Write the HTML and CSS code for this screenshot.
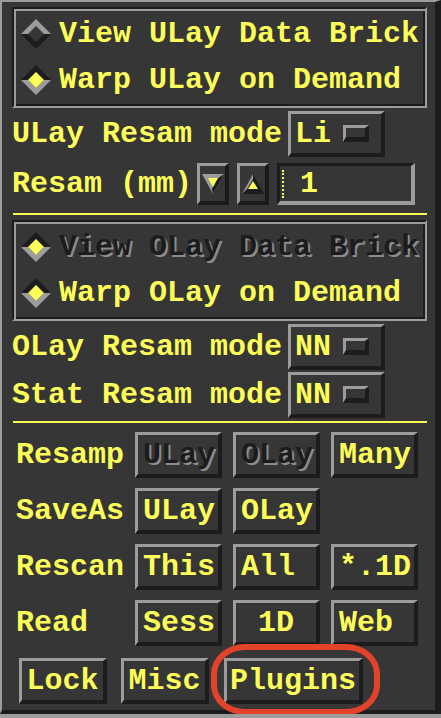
FILE: index.html
```html
<!DOCTYPE html>
<html lang="en">
<head>
    <meta charset="UTF-8">
    <meta name="viewport" content="width=device-width, initial-scale=1.0">
    <title>AFNI Define Datamode</title>
    <link rel="stylesheet" href="styles.css">
</head>
<body>
    <div class="panel">
        <!-- underlay warp mode -->
        <div class="frame">
            <div class="radio">
                <svg class="diamond" viewBox="0 0 30 30" width="30" height="30">
                    <polygon points="0,15 15,0 30,15 23,15 15,7 7,15" fill="#9c9c9c"/>
                    <polygon points="0,15 15,30 30,15 23,15 15,23 7,15" fill="#1c1c1c"/>
                </svg>
                <span>View ULay Data Brick</span>
            </div>
            <div class="radio">
                <svg class="diamond" viewBox="0 0 30 30" width="30" height="30">
                    <polygon points="0,15 15,0 30,15 23,15 15,7 7,15" fill="#1c1c1c"/>
                    <polygon points="0,15 15,30 30,15 23,15 15,23 7,15" fill="#9c9c9c"/>
                    <polygon points="7,15 15,7 23,15 15,23" fill="#fdfd5a"/>
                </svg>
                <span>Warp ULay on Demand</span>
            </div>
        </div>

        <div class="field-row first">
            <span class="label">ULay Resam mode</span>
            <div class="option"><span>Li</span><span class="indicator"></span></div>
        </div>

        <div class="field-row resam">
            <span class="label">Resam (mm)</span>
            <div class="arrow">
                <svg width="22" height="20" viewBox="0 0 22 20">
                    <polygon points="0,0 22,0 11,20" fill="#9c9c9c"/>
                    <polygon points="15,5 22,0 11,20 10,15" fill="#1c1c1c"/>
                    <polygon points="6,4 16,4 11,13" fill="#fdfd5a"/>
                </svg>
            </div>
            <div class="arrow">
                <svg width="22" height="20" viewBox="0 0 22 20">
                    <polygon points="11,0 22,20 0,20" fill="#1c1c1c"/>
                    <polygon points="11,0 0,20 5,15 11,5" fill="#9c9c9c"/>
                    <polygon points="11,7 16,15 6,15" fill="#fdfd5a"/>
                </svg>
            </div>
            <div class="textfield"><span class="caret"></span><span class="value">1</span></div>
        </div>

        <div class="sep top"></div>

        <!-- overlay warp mode -->
        <div class="frame">
            <div class="radio">
                <svg class="diamond" viewBox="0 0 30 30" width="30" height="30">
                    <polygon points="0,15 15,0 30,15 23,15 15,7 7,15" fill="#1c1c1c"/>
                    <polygon points="0,15 15,30 30,15 23,15 15,23 7,15" fill="#9c9c9c"/>
                    <polygon points="7,15 15,7 23,15 15,23" fill="#fdfd5a"/>
                </svg>
                <span class="dim">View OLay Data Brick</span>
            </div>
            <div class="radio">
                <svg class="diamond" viewBox="0 0 30 30" width="30" height="30">
                    <polygon points="0,15 15,0 30,15 23,15 15,7 7,15" fill="#1c1c1c"/>
                    <polygon points="0,15 15,30 30,15 23,15 15,23 7,15" fill="#9c9c9c"/>
                    <polygon points="7,15 15,7 23,15 15,23" fill="#fdfd5a"/>
                </svg>
                <span>Warp OLay on Demand</span>
            </div>
        </div>

        <div class="field-row first">
            <span class="label">OLay Resam mode</span>
            <div class="option"><span>NN</span><span class="indicator"></span></div>
        </div>
        <div class="field-row stat">
            <span class="label">Stat Resam mode</span>
            <div class="option"><span>NN</span><span class="indicator"></span></div>
        </div>

        <div class="sep bottom"></div>

        <div class="grid">
            <span class="label">Resamp</span>
            <div class="btn"><span class="dim">ULay</span></div>
            <div class="btn"><span class="dim">OLay</span></div>
            <div class="btn">Many</div>

            <span class="label">SaveAs</span>
            <div class="btn">ULay</div>
            <div class="btn">OLay</div>
            <span></span>

            <span class="label">Rescan</span>
            <div class="btn">This</div>
            <div class="btn">All</div>
            <div class="btn">*.1D</div>

            <span class="label">Read</span>
            <div class="btn">Sess</div>
            <div class="btn center">1D</div>
            <div class="btn">Web</div>
        </div>

        <div class="tools">
            <div class="btn lock">Lock</div>
            <div class="btn misc">Misc</div>
            <div class="btn plugins">Plugins</div>
        </div>

        <div class="mark"></div>
    </div>
</body>
</html>
```

FILE: styles.css
```css
body {
    margin: 0;
    background-color: #9c9c9c;
}

.panel {
    position: relative;
    width: 441px;
    height: 714px;
    box-sizing: border-box;
    background-color: #363636;
    border-top: 2px solid #9c9c9c;
    border-left: 2px solid #9c9c9c;
    border-right: 6px solid #1c1c1c;
    border-bottom: 4px solid #1c1c1c;
    font-family: "Liberation Mono", "DejaVu Sans Mono", monospace;
    font-weight: bold;
    font-size: 30px;
    line-height: 34px;
    color: #fdfd5a; /* motif yellow */
    white-space: nowrap;
}

.frame {
    width: 415px;
    height: 101px;
    box-sizing: border-box;
    margin: 5px 0 0 10px;
    padding: 2px;
    border: 2px solid;
    border-color: #1c1c1c #9c9c9c #9c9c9c #1c1c1c;
    box-shadow: inset 2px 2px 0 #9c9c9c, inset -2px -2px 0 #1c1c1c;
}

.radio {
    display: flex;
    align-items: center;
    height: 46px;
    padding-left: 5px;
    gap: 8px;
}

.diamond {
    flex: none;
}

.dim {
    color: #1c1c1c;
    text-shadow: 2px 2px 0 #8c8c8c;
}

.field-row {
    display: flex;
    align-items: center;
    margin-left: 10px;
    gap: 6px;
}

.field-row.first {
    margin-top: 3px;
}

.field-row.stat {
    margin-top: 2px;
}

.field-row.resam {
    margin-top: 6px;
    gap: 8px;
}

.resam .label {
    margin-right: -3px;
}

.option {
    display: flex;
    align-items: center;
    width: 97px;
    height: 46px;
    box-sizing: border-box;
    padding: 0 12px 0 4px;
    border-style: solid;
    border-width: 3px 4px 4px 3px;
    border-color: #9c9c9c #1c1c1c #1c1c1c #9c9c9c;
}

.indicator {
    margin-left: auto;
    width: 26px;
    height: 17px;
    box-sizing: border-box;
    border-style: solid;
    border-width: 3px 4px 5px 3px;
    border-color: #9c9c9c #1c1c1c #1c1c1c #9c9c9c;
}

.arrow {
    display: flex;
    align-items: center;
    justify-content: center;
    width: 32px;
    height: 42px;
    box-sizing: border-box;
    border-style: solid;
    border-width: 3px 4px 4px 3px;
    border-color: #9c9c9c #1c1c1c #1c1c1c #9c9c9c;
}

.textfield {
    display: flex;
    align-items: center;
    width: 138px;
    height: 42px;
    box-sizing: border-box;
    padding-left: 2px;
    border-style: solid;
    border-width: 3px 4px 4px 3px;
    border-color: #1c1c1c #9c9c9c #9c9c9c #1c1c1c;
}

.caret {
    width: 0;
    height: 28px;
    border-left: 2px dotted #fdfd5a;
}

.value {
    margin-left: 16px;
}

.sep {
    width: 414px;
    height: 2px;
    margin-left: 11px;
    background-color: #fdfd5a;
}

.sep.top {
    margin-top: 8px;
    margin-bottom: 4px;
}

.sep.bottom {
    margin-top: 3px;
}

.grid {
    display: grid;
    grid-template-columns: 108px 87px 87px 87px;
    grid-auto-rows: 46px;
    column-gap: 11px;
    row-gap: 10px;
    margin: 9px 0 0 14px;
    align-items: center;
}

.btn {
    display: flex;
    align-items: center;
    height: 46px;
    box-sizing: border-box;
    padding-left: 5px;
    border-style: solid;
    border-width: 3px 4px 4px 3px;
    border-color: #9c9c9c #1c1c1c #1c1c1c #9c9c9c;
}

.btn.center {
    justify-content: center;
    padding-left: 0;
}

.tools {
    display: flex;
    gap: 14px;
    margin: 12px 0 0 17px;
}

.tools .btn {
    justify-content: center;
    padding-left: 0;
}

.lock,
.misc {
    width: 88px;
}

.plugins {
    width: 139px;
    margin-left: 1px;
}

/* red hand-drawn highlight around Plugins */
.mark {
    position: absolute;
    left: 209px;
    top: 642px;
    width: 169px;
    height: 71px;
    box-sizing: border-box;
    border: 6px solid #e4432b;
    border-radius: 34px / 30px;
    filter: blur(0.6px);
}
```
